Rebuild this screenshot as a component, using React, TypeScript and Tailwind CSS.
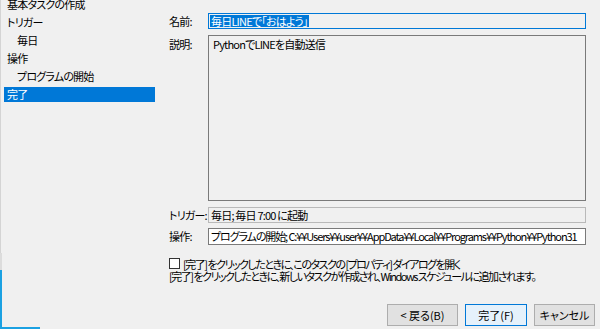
import React from "react";

const font = "font-['Noto_Sans_CJK_JP',sans-serif] [font-feature-settings:'palt']";

export default function App() {
  return (
    <div className={`w-[600px] h-[329px] bg-[#f0f0f0] flex overflow-hidden relative text-[11px] tracking-[-0.8px] text-black ${font}`}>
      {/* left edge artifacts */}
      <div className="absolute left-0 top-0 w-px h-[253px] bg-[#d4d4d4]" />
      <div className="absolute left-0 top-[253px] w-[2px] h-[17px] bg-[#dcdcdc]" />
      <div className="absolute left-0 top-[270px] w-[2px] h-[59px] bg-[#1ba1e2]" />
      <div className="absolute left-0 top-[327px] w-[40px] h-[2px] bg-[#1ba1e2]" />

      {/* Left nav */}
      <div className="w-[155px] pl-[4px] flex flex-col gap-[3px] shrink-0 leading-[15px]">
        <div className="h-[15px] px-[3px] -mt-[3px]">基本タスクの作成</div>
        <div className="h-[15px] px-[3px]">トリガー</div>
        <div className="h-[15px] pl-[13px]">毎日</div>
        <div className="h-[15px] px-[3px]">操作</div>
        <div className="h-[15px] pl-[13px]">プログラムの開始</div>
        <div className="h-[15px] px-[3px] bg-[#0078d7] text-white">完了</div>
      </div>

      {/* Main */}
      <div className="flex-1 min-w-0 flex flex-col pl-[14px] pr-[5px]">
        <div className="mr-[9px] flex flex-col min-w-0">
          {/* name */}
          <div className="flex items-center mt-[13px] h-[16px]">
            <div className="w-[39px] shrink-0">名前:</div>
            <div className="flex-1 min-w-0 h-[16px] border border-[#0078d7] bg-[#f0f0f0] flex items-center px-px">
              <span className="bg-[#0078d7] text-white leading-[12px] h-[12px] px-px whitespace-nowrap">毎日LINEで「おはよう」</span>
            </div>
          </div>
          {/* description */}
          <div className="flex mt-[6px]">
            <div className="w-[39px] shrink-0 pt-[2px] leading-[15px]">説明:</div>
            <div className="flex-1 min-w-0 h-[166px] border border-[#7a7a7a] bg-[#f0f0f0] px-[4px] pt-[1px] leading-[15px]">
              PythonでLINEを自動送信
            </div>
          </div>
          {/* trigger */}
          <div className="flex items-center mt-[6px] h-[16px]">
            <div className="w-[39px] shrink-0 whitespace-nowrap">トリガー:</div>
            <div className="flex-1 min-w-0 h-[16px] border border-[#b9b9b9] bg-[#f0f0f0] px-[2px] leading-[14px] whitespace-nowrap overflow-hidden">
              毎日; 毎日 7:00 に起動
            </div>
          </div>
          {/* operation */}
          <div className="flex items-center mt-[5px] h-[17px]">
            <div className="w-[39px] shrink-0">操作:</div>
            <div className="flex-1 min-w-0 h-[17px] border border-[#7a7a7a] bg-white px-[2px] leading-[15px] whitespace-nowrap overflow-hidden tracking-[-1.1px]">
              プログラムの開始; C:¥¥Users¥¥user¥¥AppData¥¥Local¥¥Programs¥¥Python¥¥Python31
            </div>
          </div>
          {/* checkbox */}
          <div className="flex items-center mt-[12px] h-[13px] whitespace-nowrap tracking-[-1.5px]">
            <div className="w-[11px] h-[11px] border border-[#333] bg-white shrink-0 mr-[3px]" />
            <span className="leading-[12px]">[完了] をクリックしたときに、このタスクの [プロパティ] ダイアログを開く</span>
          </div>
          <div className="leading-[12px] whitespace-nowrap tracking-[-1.5px]">
            [完了] をクリックしたときに、新しいタスクが作成され、Windows スケジュールに追加されます。
          </div>
        </div>
        {/* buttons */}
        <div className="flex justify-end gap-[7px] mt-[22px] tracking-normal">
          <div className="w-[71px] h-[22px] border border-[#adadad] bg-[#e1e1e1] flex items-center justify-center">&lt; 戻る(B)</div>
          <div className="w-[62px] h-[22px] border border-[#0078d7] bg-[#e5f1fb] flex items-center justify-center">完了(F)</div>
          <div className="w-[61px] h-[22px] border border-[#adadad] bg-[#e1e1e1] flex items-center justify-center">キャンセル</div>
        </div>
      </div>
    </div>
  );
}
